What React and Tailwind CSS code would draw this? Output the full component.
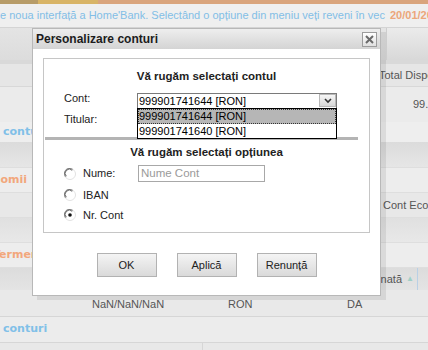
function Radio({ checked }) {
  return (
    <svg width="12" height="12" viewBox="0 0 12 12" className="shrink-0">
      <circle cx="6" cy="6" r="5.5" fill="#fff" stroke="#e2e2e2" />
      <path d="M1.6 8.6 A5 5 0 0 1 8.6 1.6" fill="none" stroke="#8a8a8a" strokeWidth="1.2" />
      <path d="M2.4 8.2 A4 4 0 0 1 8.2 2.4" fill="none" stroke="#5a5a5a" strokeWidth="0.8" />
      {checked && <circle cx="6" cy="6" r="1.8" fill="#111" />}
    </svg>
  );
}

function Btn({ children }) {
  return (
    <button className="h-[24px] w-[60px] border border-[#b2b2b2] bg-gradient-to-b from-[#f4f4f4] to-[#dadada] text-[11px] text-[#222]">
      {children}
    </button>
  );
}

export default function App() {
  return (
    <div className="relative h-[350px] w-[428px] overflow-hidden bg-[#e8e8e8] font-['Liberation_Sans',Arial,sans-serif] text-[11px] text-[#555]">
      {/* fundal pagina (estompat) */}
      <div className="flex h-[4px]">
        <div className="w-[38px] bg-[#b79c68]" />
        <div className="w-[60px] bg-[#d8b466]" />
        <div className="flex-1 bg-[#d9a47c]" />
      </div>
      <div className="flex h-[23px] items-center overflow-hidden whitespace-nowrap bg-[#efefef]">
        <span className="w-[390px] shrink-0 text-[#82bee6]">
          e noua interfață a Home'Bank. Selectând o opțiune din meniu veți reveni în vec
        </span>
        <span className="font-bold text-[#eca67a]">20/01/2011</span>
      </div>
      <div className="flex h-[33px] border-t border-[#d4d4d4] bg-gradient-to-b from-[#e4e4e4] to-[#dcdcdc]">
        <div className="w-[386px] shrink-0" />
        <div className="flex-1 border-l border-[#cdcdcd] bg-gradient-to-b from-[#ebebeb] to-[#d8d8d8]" />
      </div>
      <div className="h-[4px] bg-[#d9d9d9]" />
      <div className="flex h-[23px] items-center overflow-hidden whitespace-nowrap border-b border-[#d8d8d8] bg-[#e6e6e6]">
        <span className="w-[379px] shrink-0" />
        <span>Total Disponibil</span>
      </div>
      <div className="flex h-[35px] items-center overflow-hidden whitespace-nowrap bg-[#ebebeb]">
        <span className="w-[413px] shrink-0" />
        <span>99.999</span>
      </div>
      <div className="flex h-[20px] items-center whitespace-nowrap bg-[#eeeeee] pl-[3px] font-['DejaVu_Sans',Verdana,sans-serif] font-bold text-[#80c0e8]">
        conturi curente
      </div>
      <div className="h-[25px] bg-gradient-to-b from-[#dbdbdb] to-[#e6e6e6]" />
      <div className="flex h-[26px] items-center overflow-hidden whitespace-nowrap border-y border-[#dedede] bg-[#ededed] font-['DejaVu_Sans',Verdana,sans-serif] font-bold text-[#f2a77c]">
        <span className="ml-[-29px]">Economii</span>
      </div>
      <div className="flex h-[24px] items-center overflow-hidden whitespace-nowrap bg-[#e8e8e8]">
        <span className="w-[383px] shrink-0" />
        <span>Cont Economii</span>
      </div>
      <div className="h-[25px] border-t border-[#dedede] bg-gradient-to-b from-[#e0e0e0] to-[#e8e8e8]" />
      <div className="flex h-[26px] items-center overflow-hidden whitespace-nowrap border-y border-[#dedede] bg-[#ededed] font-['DejaVu_Sans',Verdana,sans-serif] font-bold text-[#f2a77c]">
        <span className="ml-[-7px]">Termen</span>
      </div>
      <div className="flex h-[22px] items-center whitespace-nowrap bg-gradient-to-b from-[#dcdcdc] to-[#e4e4e4]">
        <span className="w-[358px] shrink-0" />
        <span>Semnată</span>
        <span className="ml-[4px] text-[8px] text-[#9fd0c8]">▲</span>
        <span className="ml-[3px] h-full flex-1 border-l border-[#b9d0e6]" />
      </div>
      <div className="flex h-[27px] items-center whitespace-nowrap border-b border-[#d6d6d6] bg-[#e9e9e9] pt-[2px]">
        <span className="w-[92px] shrink-0" />
        <span className="w-[136px] shrink-0">NaN/NaN/NaN</span>
        <span className="w-[119px] shrink-0">RON</span>
        <span>DA</span>
      </div>
      <div className="flex h-[26px] items-center whitespace-nowrap border-b border-[#d6d6d6] bg-[#ececec] pl-[3px] font-['DejaVu_Sans',Verdana,sans-serif] font-bold text-[#80c0e8]">
        conturi
      </div>
      <div className="flex h-[10px]">
        <div className="w-[203px] border-r border-[#d6d6d6]" />
      </div>

      {/* fereastra modala */}
      <div className="absolute left-[32px] top-[28px] h-[268px] w-[349px] border border-[#b8b8b8] bg-white shadow-[5px_4px_0_rgba(0,0,0,0.08)]">
        <div className="flex h-[20px] items-center justify-between bg-gradient-to-b from-[#eeeeee] to-[#d4d4d4] pl-[3px] pr-[3px]">
          <span className="text-[12px] font-bold text-[#1c1c1c]">Personalizare conturi</span>
          <div className="flex h-[15px] w-[15px] items-center justify-center border border-[#9c9c9c] bg-gradient-to-b from-white to-[#e0e0e0]">
            <svg width="9" height="9" viewBox="0 0 9 9">
              <path d="M1 1 L8 8 M8 1 L1 8" stroke="#6a6a6a" strokeWidth="2" />
            </svg>
          </div>
        </div>

        <div className="pl-[10px] pt-[9px]">
          <div className="flex h-[175px] w-[327px] flex-col border border-[#c6c6c6] pt-[10px] text-[#222]">
            <div className="h-[14px] text-center text-[11.5px] font-bold leading-[14px]">Vă rugăm selectați contul</div>

            <div className="mt-[10px] flex h-[16px] items-center pl-[20px]">
              <span className="w-[73px] shrink-0 -translate-y-[3px]">Cont:</span>
              <div className="relative h-[16px] w-[200px]">
                <div className="flex h-full items-center border border-[#7a7a7a] bg-white pl-[1px] text-[11px] text-black">
                  999901741644 [RON]
                  <div className="absolute right-[1px] top-[1px] flex h-[13px] w-[17px] items-center justify-center border border-[#b8b8b8] bg-gradient-to-b from-[#f6f6f6] to-[#d8d8d8]">
                    <svg width="8" height="6" viewBox="0 0 8 6">
                      <path d="M1 1 L4 4 L7 1" fill="none" stroke="#333" strokeWidth="1.6" />
                    </svg>
                  </div>
                </div>
                <div className="absolute left-0 top-[15px] z-10 w-[200px] border border-black bg-white text-[11px] text-black">
                  <div className="h-[15px] border border-dotted border-[#333] bg-[#b6b6b6] leading-[13px]">999901741644 [RON]</div>
                  <div className="h-[14px] pl-[1px] leading-[14px]">999901741640 [RON]</div>
                </div>
              </div>
            </div>

            <div className="mt-[2px] flex h-[16px] items-center pl-[20px]">
              <span>Titular:</span>
            </div>

            <div className="ml-[1px] mt-[10px] h-[3px] w-[313px] bg-[#b4b4b4]" />

            <div className="mt-[5px] h-[14px] text-center text-[11.5px] font-bold leading-[14px]">Vă rugăm selectați opțiunea</div>

            <div className="mt-[6px] flex h-[17px] items-center pl-[20px]">
              <Radio />
              <span className="ml-[7px] w-[55px] shrink-0">Nume:</span>
              <div className="flex h-[17px] w-[127px] items-center border border-[#a8a8a8] pl-[2px] text-[11.5px] text-[#9a9a9a]">
                Nume Cont
              </div>
            </div>
            <div className="mt-[5px] flex h-[16px] items-center pl-[20px]">
              <Radio />
              <span className="ml-[7px]">IBAN</span>
            </div>
            <div className="mt-[4px] flex h-[16px] items-center pl-[20px]">
              <Radio checked />
              <span className="ml-[7px]">Nr. Cont</span>
            </div>
          </div>
        </div>

        <div className="mt-[20px] flex justify-center gap-[20px]">
          <Btn>OK</Btn>
          <Btn>Aplică</Btn>
          <Btn>Renunță</Btn>
        </div>
      </div>
    </div>
  );
}
